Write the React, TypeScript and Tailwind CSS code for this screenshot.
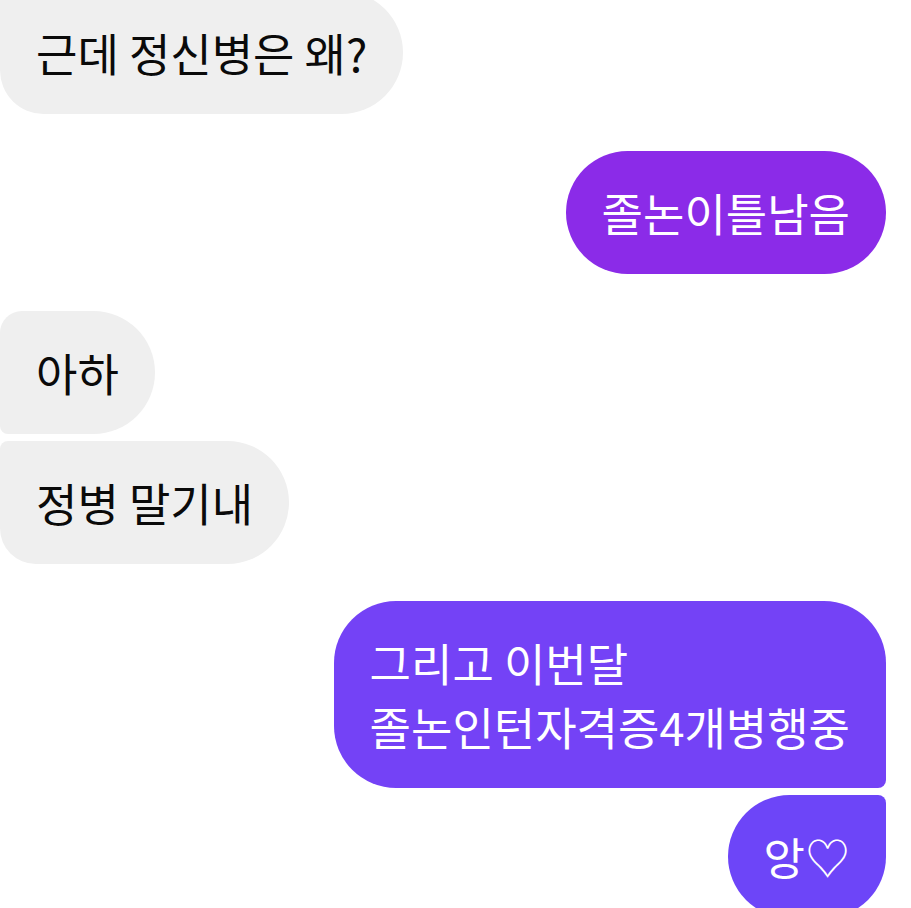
const FONT = { fontFamily: '"Noto Sans CJK KR", "Noto Sans", sans-serif' };

type Msg = {
  text: string[];
  mine: boolean;
  cls: string;
  gap: string;
};

const MESSAGES: Msg[] = [
  { text: ['근데 정신병은 왜?'], mine: false, cls: 'rounded-r-[62px] rounded-bl-[44px] -mt-[9px]', gap: '' },
  { text: ['졸논이틀남음'], mine: true, cls: 'bg-[#8b2be8] rounded-[62px]', gap: 'mt-[37px]' },
  { text: ['아하'], mine: false, cls: 'rounded-r-[62px] rounded-tl-[22px] rounded-bl-[8px]', gap: 'mt-[37px]' },
  { text: ['정병 말기내'], mine: false, cls: 'rounded-r-[62px] rounded-tl-[8px] rounded-bl-[36px]', gap: 'mt-[7px]' },
  {
    text: ['그리고 이번달', '졸논인턴자격증4개병행중'],
    mine: true,
    cls: 'bg-[#7442f6] rounded-l-[62px] rounded-tr-[62px] rounded-br-[8px]',
    gap: 'mt-[37px]',
  },
  { text: ['앙♡'], mine: true, cls: 'bg-[#6d45f8] rounded-l-[62px] rounded-tr-[8px] rounded-br-[62px]', gap: 'mt-[7px]' },
];

export default function App() {
  return (
    <div className="w-[911px] h-[908px] overflow-hidden bg-white" style={FONT}>
      <div className="flex flex-col pr-[25px]">
        {MESSAGES.map((m, i) => (
          <div key={i} className={`flex ${m.mine ? 'justify-end' : 'justify-start'} ${m.gap}`}>
            <div
              className={`px-[36px] py-[29.5px] text-[45px] leading-[64px] ${
                m.mine ? 'text-white' : 'bg-[#efefef] text-[#0a0a0a]'
              } ${m.cls}`}
            >
              {m.text.map((line) => (
                <div key={line} className="whitespace-nowrap">
                  {line}
                </div>
              ))}
            </div>
          </div>
        ))}
      </div>
    </div>
  );
}
